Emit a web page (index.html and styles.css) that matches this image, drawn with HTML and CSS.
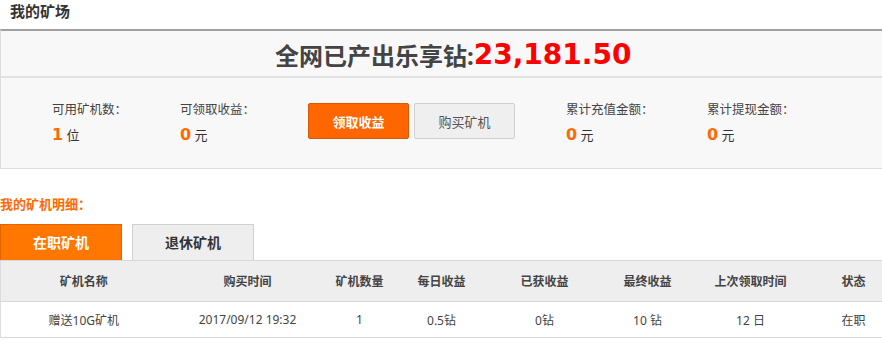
FILE: index.html
```html
<!DOCTYPE html>
<html lang="zh-CN">
<head>
    <meta charset="UTF-8">
    <meta name="viewport" content="width=device-width, initial-scale=1.0">
    <title>我的矿场</title>
    <link rel="stylesheet" href="styles.css">
</head>
<body>
    <div class="page">
        <h2 class="page-title">我的矿场</h2>

        <div class="summary">
            <div class="total">全网已产出乐享钻:<span class="total-num">23,181.50</span></div>
            <div class="stats">
                <div class="stat stat-narrow">
                    <div class="stat-label">可用矿机数：</div>
                    <div class="stat-value"><b>1</b> 位</div>
                </div>
                <div class="stat stat-narrow">
                    <div class="stat-label">可领取收益：</div>
                    <div class="stat-value"><b>0</b> 元</div>
                </div>
                <div class="actions">
                    <button class="btn btn-primary">领取收益</button>
                    <button class="btn btn-default">购买矿机</button>
                </div>
                <div class="stat stat-wide">
                    <div class="stat-label">累计充值金额：</div>
                    <div class="stat-value"><b>0</b> 元</div>
                </div>
                <div class="stat">
                    <div class="stat-label">累计提现金额：</div>
                    <div class="stat-value"><b>0</b> 元</div>
                </div>
            </div>
        </div>

        <h3 class="detail-title">我的矿机明细：</h3>
        <div class="tabs">
            <span class="tab active">在职矿机</span>
            <span class="tab">退休矿机</span>
        </div>

        <table class="miners">
            <colgroup>
                <col style="width: 166px">
                <col style="width: 162px">
                <col style="width: 62px">
                <col style="width: 102px">
                <col style="width: 104px">
                <col style="width: 102px">
                <col style="width: 104px">
                <col style="width: 102px">
            </colgroup>
            <thead>
                <tr>
                    <th>矿机名称</th>
                    <th>购买时间</th>
                    <th>矿机数量</th>
                    <th>每日收益</th>
                    <th>已获收益</th>
                    <th>最终收益</th>
                    <th>上次领取时间</th>
                    <th>状态</th>
                </tr>
            </thead>
            <tbody>
                <tr>
                    <td>赠送10G矿机</td>
                    <td>2017/09/12 19:32</td>
                    <td>1</td>
                    <td>0.5钻</td>
                    <td>0钻</td>
                    <td>10 钻</td>
                    <td>12 日</td>
                    <td>在职</td>
                </tr>
            </tbody>
        </table>
    </div>
</body>
</html>
```

FILE: styles.css
```css
body {
    margin: 0;
    font-family: "Noto Sans", "Noto Sans CJK SC", sans-serif;
    font-size: 12px;
    color: #333;
    background-color: #fff;
    overflow: hidden;
}
.page {
    width: 904px;
}
.page-title {
    margin: 0;
    height: 29px;
    padding-left: 10px;
    font-size: 15px;
    line-height: 22px;
    font-weight: bold;
    color: #333;
}
.summary {
    border-top: 2px solid #a0a0a0;
    border-left: 1px solid #ddd;
    border-bottom: 1px solid #ddd;
    background-color: #f8f8f8;
}
.total {
    height: 45px;
    line-height: 48px;
    border-bottom: 2px solid #e2e2e2;
    padding-left: 274px;
    font-size: 24px;
    font-weight: bold;
    color: #444;
}
.total-num {
    font-family: "DejaVu Sans", sans-serif;
    font-size: 28px;
    color: #ff0000;
    vertical-align: 1px;
}
.stats {
    display: flex;
    height: 90px;
    padding-left: 51px;
}
.stat {
    padding-top: 22px;
}
.stat-narrow {
    width: 128px;
}
.stat-wide {
    width: 141px;
}
.stat-label {
    font-size: 12.5px;
    line-height: 20px;
    color: #444;
}
.stat-value {
    margin-top: 3px;
    font-size: 13px;
    line-height: 24px;
    color: #333;
}
.stat-value b {
    font-family: "DejaVu Sans", sans-serif;
    font-size: 16px;
    color: #ff6a00;
}
.actions {
    display: flex;
    gap: 5px;
    width: 258px;
    padding-top: 25px;
}
.btn {
    width: 101px;
    height: 36px;
    border-radius: 2px;
    font-family: "Noto Sans", "Noto Sans CJK SC", sans-serif;
    font-size: 13px;
    cursor: pointer;
}
.btn-primary {
    background-color: #ff6600;
    border: 1px solid #d65a00;
    color: #fff;
    font-weight: bold;
}
.btn-default {
    background-color: #efefef;
    border: 1px solid #d0d0d0;
    color: #555;
}
.detail-title {
    margin: 25px 0 10px;
    font-size: 13px;
    line-height: 20px;
    font-weight: bold;
    color: #ff6a00;
}
.tabs {
    display: flex;
    gap: 10px;
}
.tab {
    width: 120px;
    height: 35px;
    line-height: 36px;
    text-align: center;
    font-size: 14px;
    font-weight: bold;
    background-color: #eee;
    border: 1px solid #d0d0d0;
    border-bottom: none;
    color: #333;
}
.tab.active {
    background-color: #ff7700;
    border-color: #e06500;
    color: #fff;
}
.miners {
    width: 904px;
    table-layout: fixed;
    border-collapse: collapse;
    border-left: 1px solid #ddd;
}
.miners th {
    height: 40px;
    padding: 0;
    background-color: #eee;
    border-top: 1px solid #d8d8d8;
    border-bottom: 1px solid #d8d8d8;
    font-size: 12px;
    font-weight: bold;
    color: #444;
}
.miners td {
    height: 35px;
    padding: 0;
    text-align: center;
    border-bottom: 1px solid #d8d8d8;
    font-size: 12px;
    color: #444;
}
```
